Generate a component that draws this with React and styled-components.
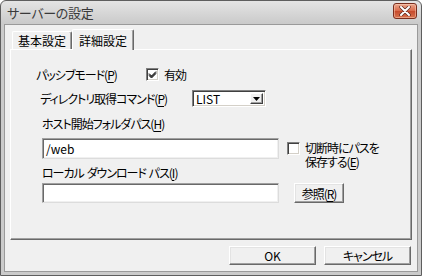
import React from 'react'
import styled, { createGlobalStyle } from 'styled-components'

const GlobalStyle = createGlobalStyle`
  html, body {
    margin: 0;
    padding: 0;
    background: #ffffff;
  }
  body {
    font-family: "Noto Sans CJK JP", "Liberation Sans", sans-serif;
    font-size: 12px;
    font-feature-settings: "palt";
    color: #000;
  }
  u {
    text-decoration-thickness: 1px;
    text-underline-offset: 2px;
  }
`

const Window = styled.div`
  width: 422px;
  height: 276px;
  box-sizing: border-box;
  border: 1px solid #5e5e5e;
  border-radius: 6px 6px 0 0;
  background: linear-gradient(#e4e4e4, #cbcbcb 22px, #cbcbcb);
  padding: 0 3px 3px 3px;
  display: flex;
  flex-direction: column;
`

const TitleBar = styled.div`
  height: 23px;
  display: flex;
  align-items: center;
  justify-content: space-between;
  padding: 0 1px 0 3px;
`

const Title = styled.div`
  font-size: 13px;
  color: #3a3a3a;
  letter-spacing: -0.3px;
  margin-top: -1px;
`

const CloseButton = styled.div`
  width: 22px;
  height: 14px;
  border: 1px solid #7a2e1e;
  border-radius: 3px;
  background: linear-gradient(#eba68c, #d9694a 50%, #c64a2c 51%, #d8734f);
  display: flex;
  align-items: center;
  justify-content: center;
  margin-top: -4px;
  box-shadow: inset 0 0 0 1px rgba(255, 220, 200, 0.45);
`

const Body = styled.div`
  flex: 1;
  background: #f0f0f0;
  border: 1px solid #9a9a9a;
  padding: 4px 5px 0 5px;
  display: flex;
  flex-direction: column;
`

const TabStrip = styled.div`
  display: flex;
  align-items: flex-end;
  padding-left: 2px;
  height: 20px;
  position: relative;
  z-index: 1;
`

const Tab = styled.div`
  box-sizing: border-box;
  height: ${p => (p.$active ? '21px' : '18px')};
  padding: 0 ${p => (p.$active ? '6px' : '5px')};
  margin-bottom: ${p => (p.$active ? '-1px' : '0')};
  display: flex;
  align-items: center;
  font-size: 12px;
  background: #f0f0f0;
  border-top: 1px solid #fff;
  border-left: 1px solid #fff;
  border-right: 1px solid #696969;
  box-shadow: inset -1px 0 0 #a0a0a0;
  border-radius: 2px 2px 0 0;
`

const Panel = styled.div`
  height: 191px;
  box-sizing: border-box;
  border-top: 1px solid #fff;
  border-left: 1px solid #fff;
  border-right: 1px solid #696969;
  border-bottom: 1px solid #696969;
  box-shadow: inset -1px -1px 0 #a0a0a0;
  display: flex;
  flex-direction: column;
`

const Row = styled.div`
  display: flex;
  align-items: ${p => p.$align || 'center'};
  padding-left: ${p => p.$left}px;
  margin-top: ${p => p.$top}px;
  height: ${p => p.$height}px;
`

const Label = styled.span`
  white-space: pre;
  line-height: 14px;
  letter-spacing: -1px;
  word-spacing: ${p => p.$words || 0}px;
  margin-left: ${p => p.$gap || 0}px;
  width: ${p => (p.$width ? p.$width + 'px' : 'auto')};
`

const CheckBox = styled.div`
  width: 13px;
  height: 13px;
  box-sizing: border-box;
  background: #fff;
  border-top: 1px solid #808080;
  border-left: 1px solid #808080;
  border-right: 1px solid #fff;
  border-bottom: 1px solid #fff;
  box-shadow: inset 1px 1px 0 #404040, inset -1px -1px 0 #d4d0c8;
  display: flex;
  align-items: center;
  justify-content: center;
  flex-shrink: 0;
`

const CheckGroup = styled.div`
  display: flex;
  align-items: flex-start;
  gap: 5px;
  margin-left: ${p => p.$left || 0}px;
  margin-top: ${p => p.$top || 0}px;
`

const CheckText = styled.div`
  line-height: 14px;
  letter-spacing: -1px;
  margin-top: -1px;
`

const Combo = styled.div`
  width: 74px;
  height: 17px;
  box-sizing: border-box;
  background: #fff;
  border-top: 1px solid #808080;
  border-left: 1px solid #808080;
  border-right: 1px solid #fff;
  border-bottom: 1px solid #fff;
  box-shadow: inset 1px 1px 0 #404040, inset -1px -1px 0 #d4d0c8;
  display: flex;
  align-items: center;
  justify-content: space-between;
  padding: 0 2px 0 3px;
  font-size: 12px;
`

const DropButton = styled.div`
  width: 13px;
  height: 11px;
  box-sizing: border-box;
  background: #f0f0f0;
  border-top: 1px solid #fff;
  border-left: 1px solid #fff;
  border-right: 1px solid #404040;
  border-bottom: 1px solid #404040;
  box-shadow: inset -1px -1px 0 #a0a0a0;
  display: flex;
  align-items: center;
  justify-content: center;
`

const TextInput = styled.div`
  width: 237px;
  height: ${p => p.$height}px;
  box-sizing: border-box;
  background: #fff;
  border-top: 1px solid #a0a0a0;
  border-left: 1px solid #a0a0a0;
  border-right: 1px solid #dcdcdc;
  border-bottom: 1px solid #dcdcdc;
  box-shadow: inset 1px 1px 0 #696969, inset -1px -1px 0 #f0f0f0;
  padding: 0 3px;
  display: flex;
  align-items: center;
  font-size: 12px;
  flex-shrink: 0;
`

const Button = styled.div`
  width: ${p => p.$width}px;
  height: ${p => p.$height}px;
  box-sizing: border-box;
  margin-left: ${p => p.$left || 0}px;
  background: #f0f0f0;
  border-top: 1px solid #fff;
  border-left: 1px solid #fff;
  border-right: 1px solid #696969;
  border-bottom: 1px solid #696969;
  box-shadow: inset -1px -1px 0 #a0a0a0, inset 1px 1px 0 #e3e3e3;
  display: flex;
  align-items: center;
  justify-content: center;
  font-size: 12px;
  letter-spacing: ${p => (p.$tight ? '-1px' : '0')};
`

const Footer = styled.div`
  display: flex;
  justify-content: flex-end;
  gap: 8px;
  margin-top: 6px;
  padding-right: 1px;
`

const Check = () => (
  <svg width="9" height="9" viewBox="0 0 9 9">
    <path d="M1 3.5 L3.5 6 L8 1.5 M1 4.5 L3.5 7 L8 2.5 M1 5.5 L3.5 8 L8 3.5" stroke="#000" strokeWidth="1" fill="none" />
  </svg>
)

const Arrow = () => (
  <svg width="7" height="4" viewBox="0 0 7 4">
    <path d="M0 0 H7 L3.5 4 Z" fill="#000" />
  </svg>
)

const CloseX = () => (
  <svg width="12" height="10" viewBox="0 0 12 10">
    <path d="M2 1 L10 9 M10 1 L2 9" stroke="#5a2a20" strokeWidth="3.4" strokeLinecap="round" />
    <path d="M2 1 L10 9 M10 1 L2 9" stroke="#ffffff" strokeWidth="2" strokeLinecap="round" />
  </svg>
)

export default function App() {
  return (
    <>
      <GlobalStyle />
      <Window>
        <TitleBar>
          <Title>サーバーの設定</Title>
          <CloseButton><CloseX /></CloseButton>
        </TitleBar>
        <Body>
          <TabStrip>
            <Tab>基本設定</Tab>
            <Tab $active>詳細設定</Tab>
          </TabStrip>
          <Panel>
            <Row $left={25} $top={18} $height={13}>
              <Label $width={110}>パッシブモード(<u>P</u>)</Label>
              <CheckBox><Check /></CheckBox>
              <Label $gap={5}>有効</Label>
            </Row>
            <Row $left={29} $top={9} $height={17}>
              <Label $width={152}>ディレクトリ取得コマンド(<u>P</u>)</Label>
              <Combo>
                LIST
                <DropButton><Arrow /></DropButton>
              </Combo>
            </Row>
            <Row $left={31} $top={10} $height={14}>
              <Label>ホスト開始フォルダパス(<u>H</u>)</Label>
            </Row>
            <Row $left={31} $top={7} $height={21} $align="flex-start">
              <TextInput $height={21}>/web</TextInput>
              <CheckGroup $left={8} $top={4}>
                <CheckBox />
                <CheckText>切断時にパスを<br />保存する(<u>E</u>)</CheckText>
              </CheckGroup>
            </Row>
            <Row $left={31} $top={7} $height={14}>
              <Label $words={1}>ローカル ダウンロード パス(<u>I</u>)</Label>
            </Row>
            <Row $left={31} $top={3} $height={20}>
              <TextInput $height={20} />
              <Button $width={50} $height={20} $left={15} $tight>参照(<u>R</u>)</Button>
            </Row>
          </Panel>
          <Footer>
            <Button $width={87} $height={19}>OK</Button>
            <Button $width={87} $height={19} $tight>キャンセル</Button>
          </Footer>
        </Body>
      </Window>
    </>
  )
}
